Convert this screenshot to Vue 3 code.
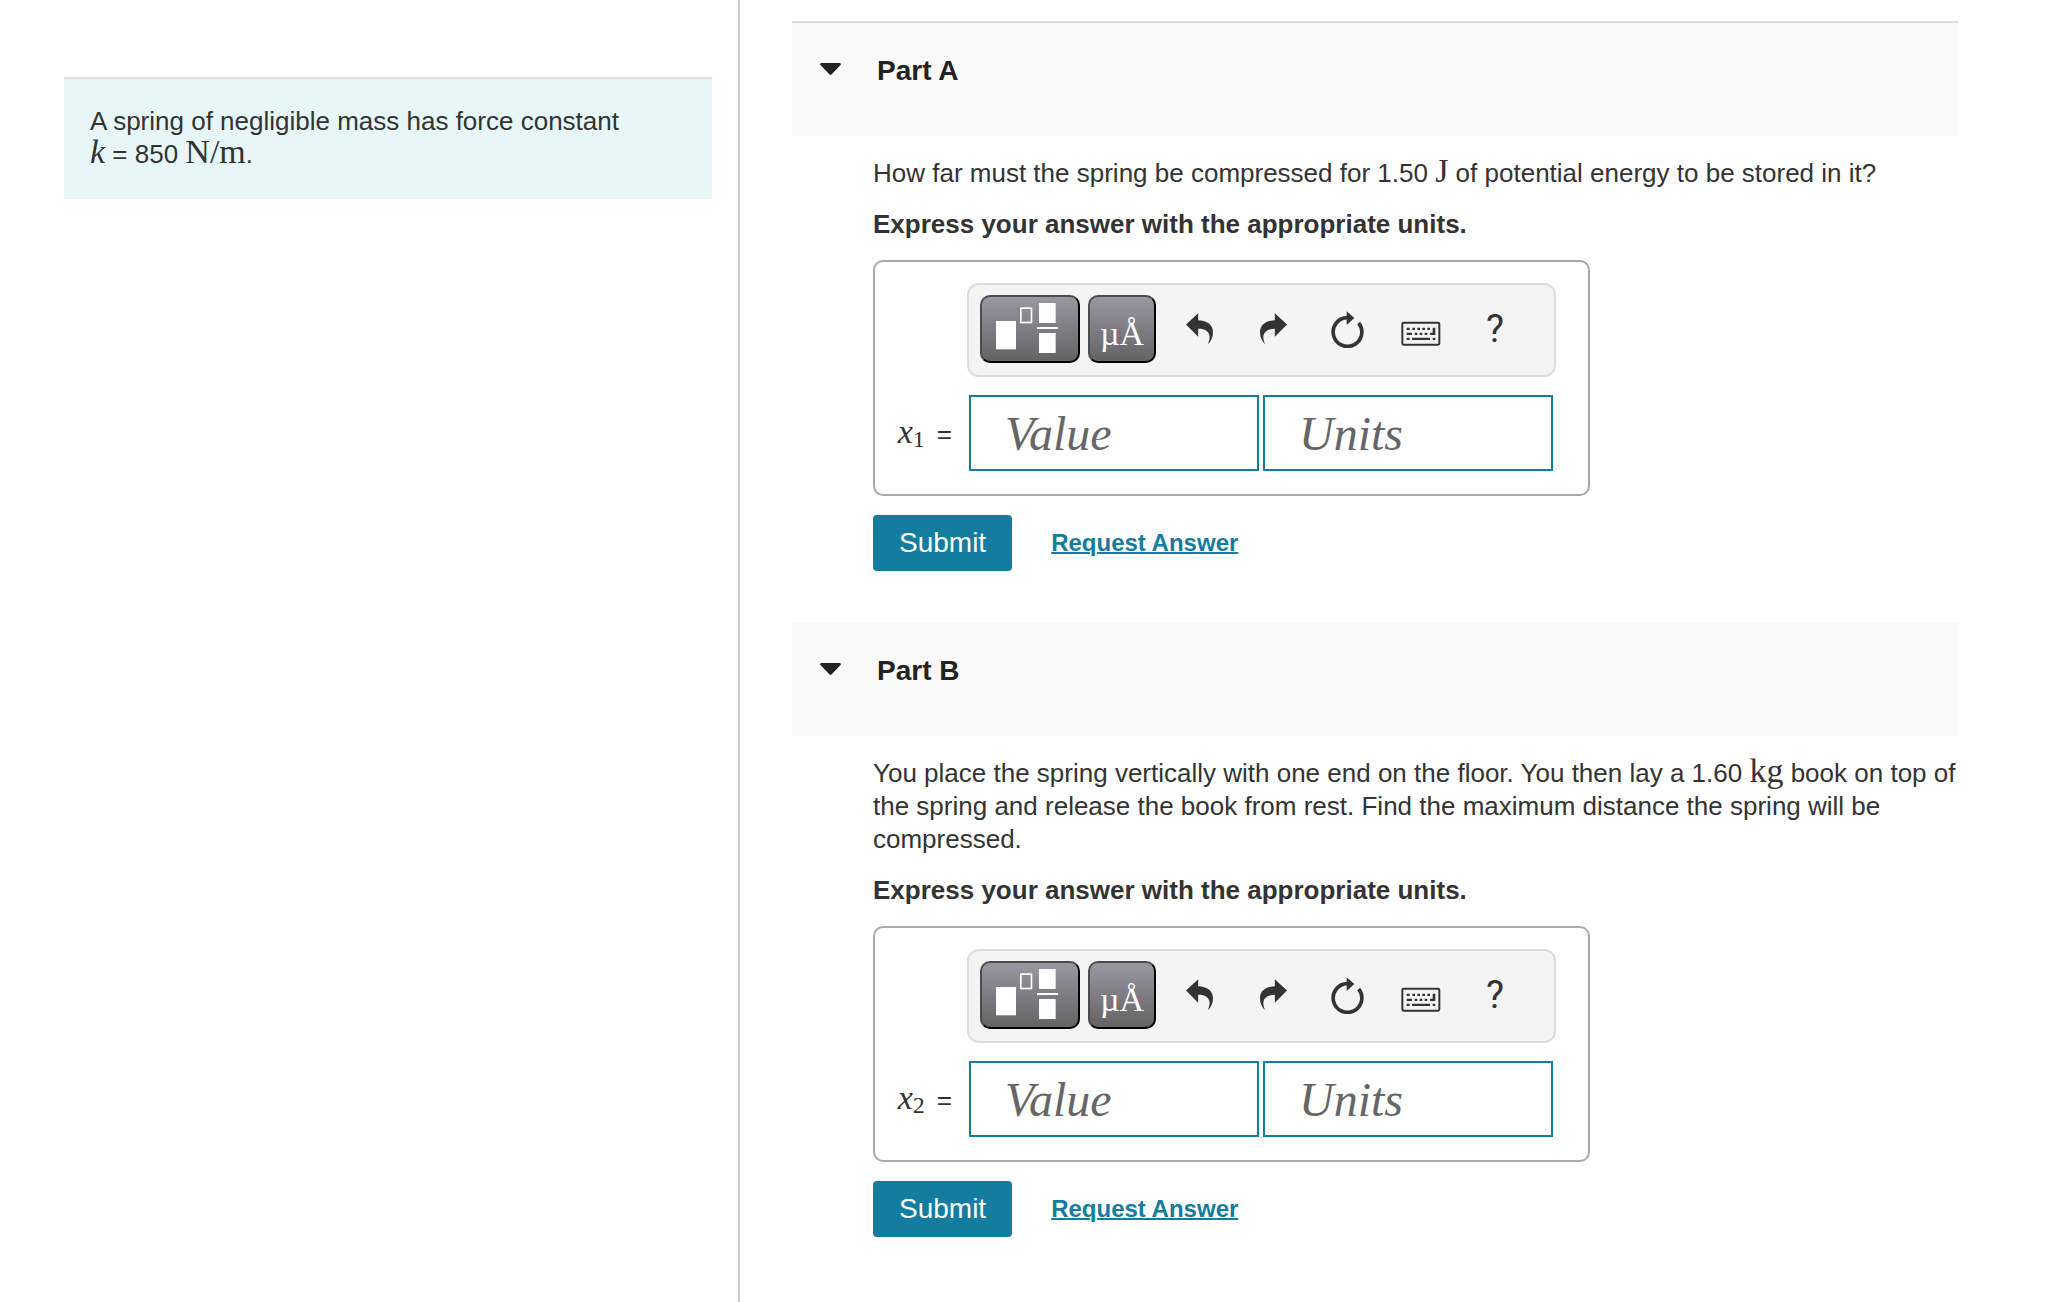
<template>
  <div class="page">
    <aside class="side">
      <div class="intro">
        A spring of negligible mass has force constant
        <span class="nowrap"><i class="math">k</i> = 850 <span class="math">N/m</span>.</span>
      </div>
    </aside>

    <main class="parts">
      <section v-for="part in parts" :key="part.id" class="part">
        <h2 class="part-title">
          <button class="part-toggle" :aria-expanded="part.open" @click="part.open = !part.open">
            <svg class="caret" viewBox="0 0 21 16" aria-hidden="true">
              <path d="M1 0h19q1.500 0.600 0.500 2L12 11q-1.500 1.400-3 0L0.500 2Q-0.500 0.600 1 0z" />
            </svg>
            Part {{ part.id }}
          </button>
        </h2>

        <form v-if="part.open" class="part-body" @submit.prevent>
          <p class="question">
            {{ part.before }} <span class="math">{{ part.unit }}</span> {{ part.after }}
          </p>
          <p class="hint">Express your answer with the appropriate units.</p>

          <div class="answer">
            <div class="toolbar">
              <button type="button" class="tool-dark tool-templates" aria-label="Templates">
                <svg viewBox="36 36 288 192" aria-hidden="true">
                  <rect x="78" y="108" width="60" height="85" fill="#fff" />
                  <rect x="152.500" y="69.500" width="32" height="43" fill="none" stroke="#fff" stroke-width="5" />
                  <rect x="207" y="54" width="50" height="60" fill="#fff" />
                  <rect x="201" y="126" width="63" height="6" fill="#fff" />
                  <rect x="207" y="144" width="50" height="60" fill="#fff" />
                </svg>
              </button>
              <button type="button" class="tool-dark tool-symbols" aria-label="Symbols">µÅ</button>

              <button type="button" class="tool" aria-label="Undo">
                <svg class="icon-arrow" viewBox="44 85 82 95" aria-hidden="true">
                  <path d="M44 119L81 85V106C108 107 126 120 126 142C126 158 120 169 110 179C122 156 117 132 81 132V156Z" />
                </svg>
              </button>
              <button type="button" class="tool" aria-label="Redo">
                <svg class="icon-arrow" viewBox="276 85 82 95" aria-hidden="true">
                  <path d="M358 119L321 85V106C294 107 276 120 276 142C276 158 282 169 292 179C280 156 285 132 321 132V156Z" />
                </svg>
              </button>
              <button type="button" class="tool" aria-label="Reset">
                <svg class="icon-reset" viewBox="483 77 102 111" aria-hidden="true">
                  <path d="M569 113A43 43 0 1 1 535 97" fill="none" stroke="#333" stroke-width="11" />
                  <path d="M533 78L556 98L533 119Z" />
                </svg>
              </button>
              <button type="button" class="tool" aria-label="Keyboard shortcuts">
                <svg class="icon-keyboard" viewBox="696 82 120 102" aria-hidden="true">
                  <rect x="700" y="114" width="111" height="66" rx="4" fill="none" stroke="#333" stroke-width="6" />
                  <path d="M713 129h9v7h-9zM730 129h8v7h-8zM745 129h8v7h-8zM760 129h8v7h-8zM775 129h8v7h-8zM791 129h8v22h-16v-7h8zM713 144h16v7h-16zM737 144h8v7h-8zM752 144h8v7h-8zM767 144h8v7h-8zM713 159h9v7h-9zM729 159h54v7h-54zM791 159h8v7h-8z" />
                </svg>
              </button>
              <button type="button" class="tool tool-help" aria-label="Help">?</button>
            </div>

            <label class="answer-label" :for="'value-' + part.id">
              <span><i>x</i><sub>{{ part.index }}</sub></span>
              <span class="equals">=</span>
            </label>
            <div class="fields">
              <input :id="'value-' + part.id" v-model="part.value" type="text" placeholder="Value">
              <input v-model="part.units" type="text" placeholder="Units" aria-label="Units">
            </div>
          </div>

          <div class="actions">
            <button type="submit" class="submit">Submit</button>
            <a href="#" class="request" @click.prevent>Request Answer</a>
          </div>
        </form>
      </section>
    </main>
  </div>
</template>

<script setup>
import { ref } from 'vue'

const parts = ref([
  {
    id: 'A',
    index: 1,
    open: true,
    before: 'How far must the spring be compressed for 1.50',
    unit: 'J',
    after: 'of potential energy to be stored in it?',
    value: '',
    units: ''
  },
  {
    id: 'B',
    index: 2,
    open: true,
    before: 'You place the spring vertically with one end on the floor. You then lay a 1.60',
    unit: 'kg',
    after: 'book on top of the spring and release the book from rest. Find the maximum distance the spring will be compressed.',
    value: '',
    units: ''
  }
])
</script>

<style>
body {
  margin: 0;
  background: #fff;
}
</style>

<style scoped>
.page {
  display: grid;
  grid-template-columns: 36% minmax(0, 1fr);
  min-height: 100vh;
  font-family: "Liberation Sans", Arial, sans-serif;
  font-size: 26px;
  line-height: 33px;
  color: #333;
}
button, input {
  box-sizing: border-box;
  font-family: inherit;
  margin: 0;
}
button {
  padding: 0;
  cursor: pointer;
}
.side {
  padding: 77px 26px 0 64px;
}
.intro {
  padding: 26px 26px 28px;
  border-top: 2px solid #dce0e0;
  background: #e7f7f8;
}
.nowrap {
  white-space: nowrap;
}
.math {
  font-family: "Liberation Serif", "Times New Roman", serif;
  font-size: 34px;
  line-height: 24px;
}
.parts {
  padding: 21px 92px 0 52px;
  border-left: 2px solid #c1cbd8;
}
.part:first-child .part-title {
  border-top: 2px solid #dcdcdc;
}
.part-title {
  margin: 0;
  padding: 32px 28px 49px;
  background: #f9f9f9;
  font-size: 28px;
  line-height: 32px;
}
.part-toggle {
  display: flex;
  align-items: center;
  gap: 36px;
  border: 0;
  background: none;
  color: #222;
  font-size: 28px;
  font-weight: bold;
  line-height: 32px;
}
.caret {
  width: 21px;
  height: 16px;
  fill: #222;
}
.part-body {
  padding: 21px 0 52px 81px;
}
.question {
  margin: 0 0 18px;
}
.hint {
  margin: 0 0 19px;
  font-weight: bold;
}
.answer {
  box-sizing: border-box;
  display: grid;
  grid-template-columns: 92px minmax(0, 1fr);
  row-gap: 18px;
  max-width: 717px;
  padding: 21px 32px 23px 0;
  border: 2px solid #a9a9a9;
  border-radius: 10px;
}
.toolbar {
  grid-column: 2;
  display: flex;
  align-items: center;
  padding: 10px 11px 12px;
  border: 2px solid #dcdcdc;
  border-radius: 12px;
  background: #f4f4f4;
}
.tool-dark {
  height: 68px;
  margin-right: 8px;
  border: 2px solid;
  border-color: #4c4c4c #000 #000 #4c4c4c;
  border-radius: 10px;
  background: linear-gradient(#9a97a3, #636363);
  color: #fff;
}
.tool-templates {
  width: 100px;
}
.tool-templates svg {
  display: block;
  width: 96px;
  height: 64px;
}
.tool-symbols {
  width: 68px;
  margin-right: 6px;
  padding-top: 10px;
  font-family: "Liberation Serif", "Times New Roman", serif;
  font-size: 34px;
  line-height: 40px;
}
.tool {
  display: flex;
  flex: 0 1 74px;
  align-items: center;
  justify-content: center;
  height: 68px;
  border: 0;
  background: none;
  color: #333;
}
.tool svg {
  fill: #333;
}
.icon-arrow {
  width: 27px;
  height: 32px;
}
.icon-reset {
  width: 34px;
  height: 37px;
}
.icon-keyboard {
  width: 40px;
  height: 34px;
}
.tool-help {
  font-family: Roboto, sans-serif;
  font-size: 38px;
}
.answer-label {
  display: flex;
  align-items: baseline;
  align-self: center;
  justify-content: flex-end;
  gap: 12px;
  padding-right: 15px;
  white-space: nowrap;
  font-family: "Liberation Serif", "Times New Roman", serif;
  font-size: 34px;
}
.answer-label sub {
  font-size: 24px;
  line-height: 24px;
  vertical-align: -4px;
}
.equals {
  font-family: "Liberation Sans", Arial, sans-serif;
  font-size: 26px;
}
.fields {
  display: flex;
  gap: 4px;
  padding: 0 3px 0 2px;
}
.fields input {
  flex: 1;
  min-width: 0;
  height: 76px;
  padding: 0 34px;
  border: 2px solid #147c9e;
  border-radius: 0;
  background: #fff;
  color: #333;
  font-family: "Liberation Serif", "Times New Roman", serif;
  font-size: 48px;
}
.fields input::placeholder {
  color: #666;
  font-style: italic;
  opacity: 1;
}
.actions {
  display: flex;
  align-items: center;
  gap: 39px;
  margin-top: 19px;
}
.submit {
  height: 56px;
  padding: 0 26px;
  border: 0;
  border-radius: 4px;
  background: #147c9e;
  color: #fff;
  font-size: 28px;
}
.request {
  padding-bottom: 2px;
  color: #147c9e;
  font-size: 24px;
  font-weight: bold;
  text-decoration: underline;
  text-decoration-thickness: 2px;
}
</style>
